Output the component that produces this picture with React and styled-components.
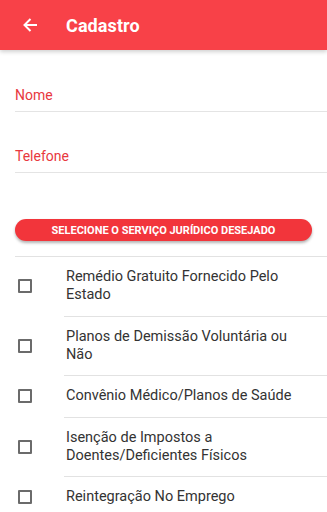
import React from "react";
import styled, { createGlobalStyle } from "styled-components";

const GlobalStyle = createGlobalStyle`
  html, body {
    margin: 0;
    padding: 0;
    background: #fff;
    font-family: Roboto, "Liberation Sans", sans-serif;
  }
`;

const services = [
  "Remédio Gratuito Fornecido Pelo Estado",
  "Planos de Demissão Voluntária ou Não",
  "Convênio Médico/Planos de Saúde",
  "Isenção de Impostos a Doentes/Deficientes Físicos",
  "Reintegração No Emprego",
];

export default function App() {
  return (
    <Page>
      <GlobalStyle />
      <AppBar>
        <BackButton aria-label="voltar">
          <svg width="16" height="16" viewBox="0 0 16 16">
            <path
              d="M15 8H2.5M8.5 2L2.5 8l6 6"
              fill="none"
              stroke="#fff"
              strokeWidth="2"
            />
          </svg>
        </BackButton>
        <Title>Cadastro</Title>
      </AppBar>

      <Form>
        <Field>
          <Label>Nome</Label>
        </Field>
        <Field>
          <Label>Telefone</Label>
        </Field>
      </Form>

      <ServiceButton>SELECIONE O SERVIÇO JURÍDICO DESEJADO</ServiceButton>

      <List>
        {services.map((s) => (
          <Item key={s}>
            <Check />
            <ItemText>{s}</ItemText>
          </Item>
        ))}
      </List>
    </Page>
  );
}

const Page = styled.div`
  width: 327px;
  height: 512px;
  overflow: hidden;
  background: #fff;
`;

const AppBar = styled.header`
  height: 50px;
  background: #f84148;
  display: flex;
  align-items: center;
  box-shadow: 0 2px 4px rgba(0, 0, 0, 0.18);
  position: relative;
  z-index: 1;
`;

const BackButton = styled.div`
  width: 16px;
  height: 16px;
  margin-left: 22px;
  display: flex;
`;

const Title = styled.h1`
  margin: 0 0 0 28px;
  color: #fff;
  font-size: 18px;
  font-weight: 700;
  letter-spacing: 0.1px;
`;

const Form = styled.div`
  display: flex;
  flex-direction: column;
  gap: 21px;
  padding: 22px 0 0 15px;
`;

const Field = styled.div`
  height: 39px;
  border-bottom: 1px solid #e4e4e4;
  display: flex;
  align-items: flex-start;
`;

const Label = styled.span`
  color: #e8383e;
  font-size: 14px;
  line-height: 18px;
  margin-top: 14px;
`;

const ServiceButton = styled.div`
  margin: 46px 15px 0 15px;
  height: 22px;
  border-radius: 11px;
  background: #f2353b;
  color: #fff;
  font-size: 11px;
  font-weight: 700;
  display: flex;
  align-items: center;
  justify-content: center;
  box-shadow: 0 2px 3px rgba(0, 0, 0, 0.3);
`;

const List = styled.div`
  margin-top: 15px;
  margin-left: 15px;
  border-top: 1px solid #e2e2e2;
`;

const Item = styled.div`
  display: flex;
  align-items: center;
  padding: 11.25px 20px 11.25px 0;
  box-sizing: border-box;

  & + & {
    border-top: 1px solid #e2e2e2;
    margin-left: 49px;
  }
  & + & > span:first-child {
    margin-left: -46px;
  }
`;

const Check = styled.span`
  width: 14px;
  height: 14px;
  box-sizing: border-box;
  border: 2px solid #6b6b6b;
  border-radius: 1px;
  margin-left: 3px;
  margin-right: 34px;
  flex-shrink: 0;
`;

const ItemText = styled.span`
  color: #333;
  font-size: 14.5px;
  line-height: 18px;
`;
